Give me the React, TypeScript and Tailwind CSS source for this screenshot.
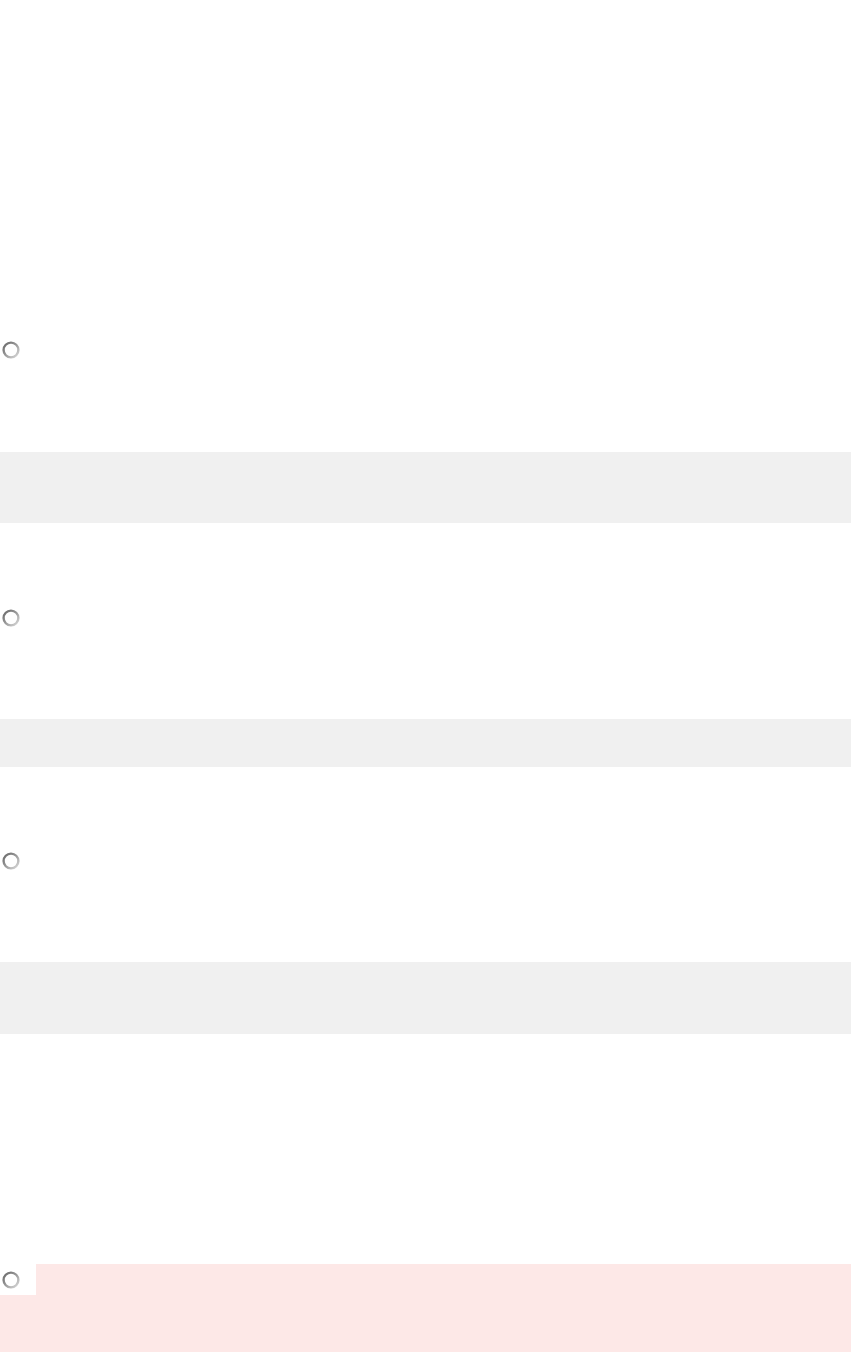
import React from "react";

function Radio() {
  return (
    <svg width="18" height="18" viewBox="0 0 18 18" className="block">
      <defs>
        <linearGradient id="rg" x1="0" y1="0" x2="1" y2="1">
          <stop offset="0" stopColor="#666666" />
          <stop offset="0.5" stopColor="#9a9a9a" />
          <stop offset="1" stopColor="#dcdcdc" />
        </linearGradient>
      </defs>
      <circle cx="9" cy="9" r="7.4" fill="#ffffff" stroke="url(#rg)" strokeWidth="2.4" />
    </svg>
  );
}

export default function App() {
  return (
    <div className="w-[851px] min-h-[1352px] bg-white flex flex-col">
      <div className="h-[341px]" />
      <div className="pl-[2px] h-[18px]">
        <Radio />
      </div>
      <div className="h-[93px]" />
      <div className="h-[71px] bg-[#f0f0f0]" />
      <div className="h-[86px]" />
      <div className="pl-[2px] h-[18px]">
        <Radio />
      </div>
      <div className="h-[92px]" />
      <div className="h-[48px] bg-[#f0f0f0]" />
      <div className="h-[85px]" />
      <div className="pl-[2px] h-[18px]">
        <Radio />
      </div>
      <div className="h-[92px]" />
      <div className="h-[72px] bg-[#f0f0f0]" />
      <div className="h-[230px]" />
      <div className="bg-[#fde8e7] flex-1 min-h-[88px]">
        <div className="w-[36px] h-[31px] bg-white pl-[2px] pt-[7px]">
          <Radio />
        </div>
      </div>
    </div>
  );
}
